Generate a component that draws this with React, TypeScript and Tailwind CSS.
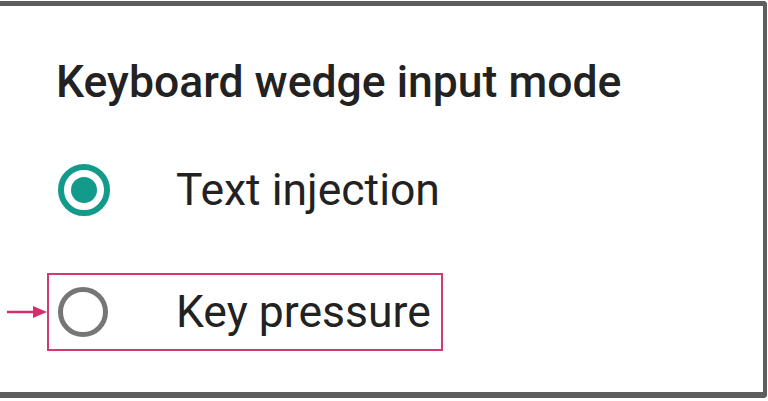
import React from 'react';

function Radio({ checked }: { checked: boolean }) {
  if (checked) {
    return (
      <div className="w-[52px] h-[52px] rounded-full border-[6px] border-[#129a8a] flex items-center justify-center shrink-0">
        <div className="w-[26px] h-[26px] rounded-full bg-[#129a8a]" />
      </div>
    );
  }
  return <div className="w-[50px] h-[50px] rounded-full border-[5px] border-[#767676] shrink-0" />;
}

export default function App() {
  return (
    <div className="w-[768px] h-[401px] bg-white pt-px overflow-hidden" style={{ fontFamily: 'Roboto, "Liberation Sans", sans-serif' }}>
      <div className="w-[767px] h-[397px] border-t-[5px] border-r-[4px] border-b-[6px] border-[#5e5e5e] rounded-r-[4px] flex flex-col">
        <h1 className="pl-[56px] pt-[52px] text-[44.5px] leading-[48px] font-medium text-[#222222]">
          Keyboard wedge input mode
        </h1>

        <div className="flex items-center pl-[58px] mt-[54px] h-[60px]">
          <Radio checked />
          <span className="ml-[66px] text-[44.5px] leading-[48px] text-[#222222]">Text injection</span>
        </div>

        <div className="flex items-center mt-[53px]">
          <svg className="w-[42px] h-[20px] shrink-0 ml-[5px]" viewBox="0 0 42 20">
            <line x1="2" y1="10" x2="30" y2="10" stroke="#d42d6c" strokeWidth="2.5" />
            <path d="M28 4 L42 10 L28 16 Z" fill="#d42d6c" />
          </svg>
          <div className="w-[396px] h-[78px] border-2 border-[#d13a6f] flex items-center">
            <div className="ml-[9px]">
              <Radio checked={false} />
            </div>
            <span className="ml-[68px] text-[44.5px] leading-[48px] text-[#222222]">Key pressure</span>
          </div>
        </div>
      </div>
    </div>
  );
}
